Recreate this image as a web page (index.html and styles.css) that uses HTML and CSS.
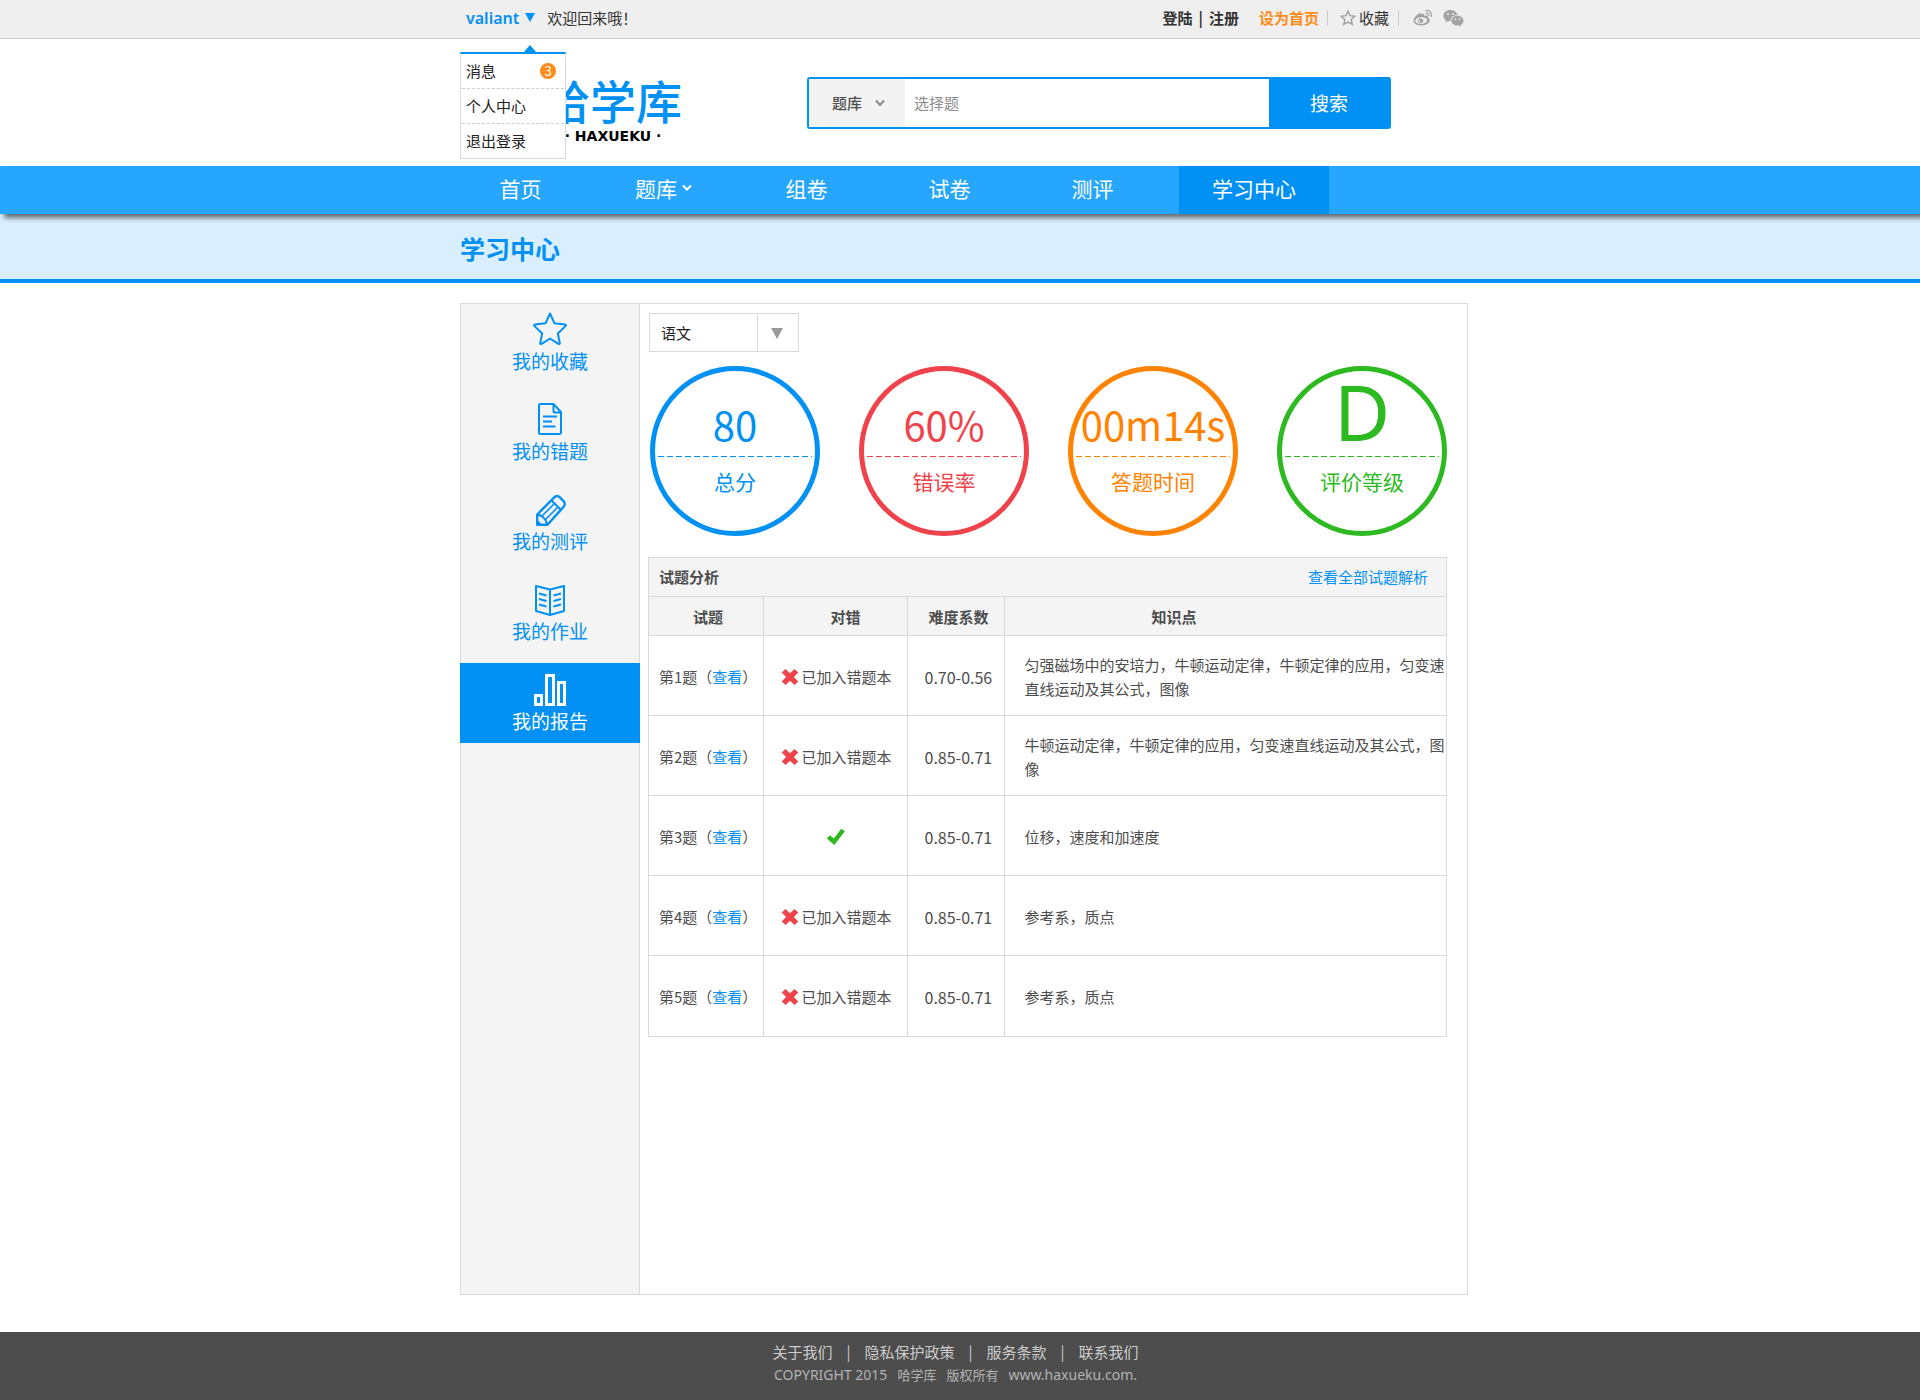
FILE: index.html
```html
<!DOCTYPE html>
<html lang="zh-CN">
<head>
<meta charset="utf-8">
<meta name="viewport" content="width=device-width, initial-scale=1">
<title>学习中心 - 哈学库</title>
<link rel="stylesheet" href="styles.css">
</head>
<body>
<div class="topbar">
  <div class="wrap topbar-inner">
    <div class="account">
      <a class="account-name" href="#">valiant <span class="caret"></span></a>
      <span>欢迎回来哦！</span>
      <ul class="account-menu">
        <li><a href="#">消息 <span class="badge">3</span></a></li>
        <li><a href="#">个人中心</a></li>
        <li><a href="#">退出登录</a></li>
      </ul>
    </div>
    <div class="tools">
      <div class="auth"><a href="#">登陆</a><span>|</span><a href="#">注册</a></div>
      <a class="set-home" href="#">设为首页</a>
      <a class="favorite" href="#">
        <svg width="16" height="16" viewBox="0 0 16 16" aria-hidden="true"><path d="M8 1.2l2 4.5 4.9.5-3.7 3.3 1.1 4.9L8 11.9l-4.3 2.5 1.1-4.9L1.100 6.200l4.900-.5z" fill="none" stroke="#999" stroke-width="1.300"/></svg>
        收藏</a>
      <div class="social">
        <a href="#" aria-label="微博"><svg width="20" height="18" viewBox="0 0 20 18"><path fill="#a3a3a3" fill-rule="evenodd" d="M8.300 5.200c1.600-.7 3.400-.6 3 1.300-.1.600 0 .5.500.3 1.800-.6 3.500-.2 2.900 1.500-.2.600 0 .6.500.8 3.700 1.500.7 7.400-6.700 7.400C3.800 16.500.5 14.500.5 11.800.5 8.600 5.400 3.600 7.900 4.300c.5.200.6.500.4.900zM8 8.200c-3.400.2-6 2-5.800 3.900.2 1.900 3 3.100 6.400 2.800 3.300-.3 5.700-2.200 5.500-4C13.900 9 11.400 8 8 8.200zm-.6 1.300c1.900-.2 3.300 1 3 2.500-.3 1.400-1.900 2.400-3.600 2.200-1.700-.2-2.600-1.500-2.100-2.800.4-1 1.400-1.800 2.700-1.900zm-1.200 2a1 .9 0 1 0 .1 1.800 1 .9 0 0 0-.1-1.800z"/><path d="M13 1.600c3.600-.7 6.200 2.300 5.200 5.700M13.200 4.300c1.900-.3 2.900 1 2.500 2.600" fill="none" stroke="#a3a3a3" stroke-width="1.300" stroke-linecap="round"/></svg></a>
        <a href="#" aria-label="微信"><svg width="21" height="18" viewBox="0 0 21 18"><path fill="#a3a3a3" fill-rule="evenodd" d="M7.500 1C3.500 1 .4 3.600.4 6.800c0 1.900 1 3.500 2.700 4.500l-.8 2.200 2.700-1.400c.9.300 1.700.4 2.700.4-.8-3.700 2.500-6.700 6.800-6.600C13.800 3 11 1 7.500 1zM5 4a1 1 0 1 1 0 2 1 1 0 0 1 0-2zm5 0a1 1 0 1 1 0 2 1 1 0 0 1 0-2z"/><path fill="#a3a3a3" fill-rule="evenodd" d="M14.500 6.800c-3.400 0-6 2.200-6 4.900s2.600 4.900 6 4.900c.7 0 1.400-.1 2-.3l2.200 1.200-.6-1.900c1.500-.9 2.400-2.300 2.400-3.900 0-2.700-2.600-4.900-6-4.900zm-2 2.600a.8.800 0 1 1 0 1.700.8.800 0 0 1 0-1.700zm4 0a.8.800 0 1 1 0 1.700.8.800 0 0 1 0-1.700z"/></svg></a>
      </div>
    </div>
  </div>
</div>

<header class="header">
  <div class="wrap header-inner">
    <a class="logo" href="#"><span class="logo-name">哈学库</span><span class="logo-latin">· HAXUEKU ·</span></a>
    <form class="search" role="search">
      <div class="search-scope">
        <select aria-label="搜索范围"><option>题库</option></select>
        <svg width="10" height="8" viewBox="0 0 10 8" aria-hidden="true"><path d="M1 1.500l4 4.500 4-4.500" fill="none" stroke="#8a8a8a" stroke-width="2"/></svg>
      </div>
      <input class="search-text" type="text" aria-label="搜索内容" placeholder="选择题">
      <button class="search-button" type="button">搜索</button>
    </form>
  </div>
</header>

<nav class="nav">
  <div class="wrap nav-inner">
    <a href="#">首页</a>
    <a href="#">题库<svg width="10" height="8" viewBox="0 0 10 8" aria-hidden="true"><path d="M1 1.500l4 4 4-4" fill="none" stroke="#fff" stroke-width="2"/></svg></a>
    <a href="#">组卷</a>
    <a href="#">试卷</a>
    <a href="#">测评</a>
    <a class="active" href="#">学习中心</a>
  </div>
</nav>

<div class="title-bar"><div class="wrap"><h1>学习中心</h1></div></div>

<div class="wrap">
  <div class="board">
    <aside class="sidebar">
      <a href="#"><svg width="34" height="34" viewBox="0 0 34 34" aria-hidden="true"><path d="M17 1.500l4.500 9.800 10.600 1.300c1 .1 1 .9.400 1.500l-7.700 7.400 2 9.400c.2 1-.6 1.400-1.400 1L17 26.500l-8.400 5.400c-.8.400-1.600 0-1.400-1l2-9.400-7.700-7.400c-.6-.6-.6-1.400.4-1.500l10.600-1.300z" fill="none" stroke="currentColor" stroke-width="2" stroke-linejoin="round"/></svg>我的收藏</a>
      <a href="#"><svg width="34" height="34" viewBox="0 0 34 34" aria-hidden="true"><g fill="none" stroke="currentColor" stroke-width="2" stroke-linejoin="round"><path d="M7.500 2h13L28 10v20.500a1.500 1.500 0 0 1-1.500 1.500h-19A1.500 1.500 0 0 1 6 30.500v-27A1.500 1.500 0 0 1 7.500 2z"/><path d="M20.500 2.500V9a1.500 1.500 0 0 0 1.500 1.500h6M10 14.500h14M10 19.500h9M10 24.500h12.500"/></g></svg>我的错题</a>
      <a href="#"><svg width="34" height="34" viewBox="0 0 34 34" aria-hidden="true"><g fill="none" stroke="currentColor" stroke-linejoin="round"><path stroke-width="2.400" d="M4.200 32.800V22.500L21 5.600c1.800-1.800 4.300-1.800 6.100 0l3.300 3.300c1.800 1.800 1.800 4.300 0 6.100L14.500 32.800z"/><path stroke-width="2" d="M4.500 22.500c4.500 1 8.500 5 9.800 10M18.500 8.500l9.500 9.500"/><path stroke-width="1.600" d="M9 24L21 12M12.500 27.500L24.500 15.500"/></g><path d="M4 27.500v5.500h5.500z" fill="currentColor"/></svg>我的测评</a>
      <a href="#"><svg width="34" height="34" viewBox="0 0 34 34" aria-hidden="true"><g fill="none" stroke="currentColor" stroke-width="2" stroke-linejoin="round"><path d="M17 7.500L3 4v25l14 4 14-4V4zM17 7.500V33M6 11.500l7.500 2M6 17l7.500 2M6 22.500l7.500 2M28 11.500l-7.500 2M28 17l-7.500 2M28 22.500l-7.500 2"/></g></svg>我的作业</a>
      <a class="active" href="#"><svg width="34" height="34" viewBox="0 0 34 34" aria-hidden="true"><g fill="none" stroke="currentColor" stroke-width="3"><path d="M2.500 23.500h6v9h-6zM13.500 3.500h7v29h-7zM25.500 10.500h6v22h-6z"/></g></svg>我的报告</a>
    </aside>
    <main class="content">
      <div class="subject">
        <select aria-label="科目"><option>语文</option></select>
        <span class="subject-arrow"></span>
      </div>
      <div class="stats">
        <div class="stat blue"><strong>80</strong><span>总分</span></div>
        <div class="stat red"><strong>60%</strong><span>错误率</span></div>
        <div class="stat orange"><strong>00m14s</strong><span>答题时间</span></div>
        <div class="stat green"><strong class="grade">D</strong><span>评价等级</span></div>
      </div>
      <section class="analysis">
        <div class="analysis-head"><h2>试题分析</h2><a href="#">查看全部试题解析</a></div>
        <table>
          <colgroup><col class="col-no"><col class="col-result"><col class="col-level"><col></colgroup>
          <thead><tr><th>试题</th><th>对错</th><th>难度系数</th><th>知识点</th></tr></thead>
          <tbody>
            <tr><td>第1题（<a href="#">查看</a>）</td><td><div class="result"><svg class="mark" viewBox="0 0 18 18" aria-hidden="true"><use href="#cross"/></svg>已加入错题本</div></td><td>0.70-0.56</td><td>匀强磁场中的安培力，牛顿运动定律，牛顿定律的应用，匀变速直线运动及其公式，图像</td></tr>
            <tr><td>第2题（<a href="#">查看</a>）</td><td><div class="result"><svg class="mark" viewBox="0 0 18 18" aria-hidden="true"><use href="#cross"/></svg>已加入错题本</div></td><td>0.85-0.71</td><td>牛顿运动定律，牛顿定律的应用，匀变速直线运动及其公式，图像</td></tr>
            <tr><td>第3题（<a href="#">查看</a>）</td><td><div class="result right"><svg width="20" height="18" viewBox="0 0 20 18" role="img" aria-label="正确"><path d="M.8 10.500L4 7.300l3.800 3.200L15.300.8l3.600 2.400L8.300 17z" fill="#2dba20"/></svg></div></td><td>0.85-0.71</td><td>位移，速度和加速度</td></tr>
            <tr><td>第4题（<a href="#">查看</a>）</td><td><div class="result"><svg class="mark" viewBox="0 0 18 18" aria-hidden="true"><use href="#cross"/></svg>已加入错题本</div></td><td>0.85-0.71</td><td>参考系，质点</td></tr>
            <tr><td>第5题（<a href="#">查看</a>）</td><td><div class="result"><svg class="mark" viewBox="0 0 18 18" aria-hidden="true"><use href="#cross"/></svg>已加入错题本</div></td><td>0.85-0.71</td><td>参考系，质点</td></tr>
          </tbody>
        </table>
      </section>
    </main>
  </div>
</div>

<footer class="footer">
  <div class="footer-links"><a href="#">关于我们</a><span>|</span><a href="#">隐私保护政策</a><span>|</span><a href="#">服务条款</a><span>|</span><a href="#">联系我们</a></div>
  <div class="copyright"><span class="latin">COPYRIGHT 2015</span><span>哈学库</span><span>版权所有</span><span class="latin">www.haxueku.com.</span></div>
</footer>

<svg class="symbols" aria-hidden="true"><symbol id="cross" viewBox="0 0 18 18"><path d="M4.500 1L9 5.200 13.500 1 17.300 4.500 12.900 9l4.400 4.500-3.800 3.500L9 12.800 4.500 17 .7 13.500 5.100 9 .7 4.500z" fill="#f0424a"/></symbol></svg>
</body>
</html>
```
FILE: styles.css
```css
* { box-sizing: border-box; }
body {
  margin: 0;
  color: #4d4d4d;
  background: #fff;
  font: 15px/24px "Noto Sans CJK SC", "Noto Sans", sans-serif;
}
a { color: inherit; text-decoration: none; }
ul { list-style: none; margin: 0; padding: 0; }
h1, h2 { margin: 0; }
svg { display: block; flex: none; }
select, input, button { font: inherit; border: 0; border-radius: 0; margin: 0; outline: 0; }
select { appearance: none; background: transparent; }
.symbols { display: none; }

.wrap { max-width: 1016px; margin: 0 auto; padding-left: 8px; }

.topbar { background: #efefef; border-bottom: 1px solid #ccc; color: #333; }
.topbar-inner { display: flex; justify-content: space-between; align-items: center; height: 38px; padding-bottom: 3px; }
.account { position: relative; display: flex; align-items: center; align-self: stretch; gap: 12px; padding-left: 6px; }
.account-name { display: flex; align-items: center; gap: 6px; color: #0190f3; font: 600 16px/24px "Noto Sans", sans-serif; }
.caret { border: 5px solid transparent; border-top: 9px solid #0190f3; border-bottom: 0; }
.account-menu {
  position: absolute; z-index: 2; top: 52px; left: 0; width: 106px;
  background: #fff; border: 1px solid #d9d9d9; border-top: 2px solid #0190f3; color: #222;
}
.account-menu::before {
  content: ""; position: absolute; top: -9px; right: 29px;
  border: 6px solid transparent; border-bottom: 7px solid #0190f3; border-top: 0;
}
.account-menu li { margin: 0 1px; }
.account-menu li + li { border-top: 1px dashed #ccc; }
.account-menu a { display: flex; align-items: center; justify-content: space-between; height: 34px; padding: 0 8px 0 4px; }
.badge { width: 16px; height: 16px; border-radius: 50%; background: #ff8c1a; color: #fff; font-size: 13px; line-height: 16px; text-align: center; }

.tools { display: flex; align-items: center; padding-right: 4px; }
.auth { display: flex; gap: 6px; font-weight: 700; margin-right: 20px; }
.set-home { color: #ff8c1a; font-weight: 700; padding-right: 8px; border-right: 1px solid #ccc; line-height: 16px; }
.favorite { display: flex; align-items: center; gap: 3px; padding: 0 9px 0 12px; border-right: 1px solid #ccc; line-height: 16px; }
.social { display: flex; gap: 10px; padding-left: 14px; }

.header-inner { display: flex; justify-content: space-between; align-items: center; height: 127px; padding-right: 77px; padding-left: 92px; }
.logo { display: flex; flex-direction: column; align-items: center; gap: 3px; padding-top: 16px; color: #0190f3; }
.logo-name { font-size: 46px; line-height: 48px; font-weight: 500; }
.logo-latin { color: #000; font: 700 14px/20px "DejaVu Sans", sans-serif; }
.search { display: flex; width: 584px; height: 52px; border: 2px solid #0190f3; border-radius: 3px; background: #0190f3; }
.search-scope { display: flex; align-items: center; width: 96px; padding-left: 23px; gap: 13px; background: #f3f3f3; }
.search-scope select { width: 30px; padding: 0; color: #4d4d4d; font-weight: 500; }
.search-text { flex: 1; min-width: 0; padding: 0 9px; color: #4d4d4d; background: #fff; }
.search-text::placeholder { color: #8c8c8c; opacity: 1; }
.search-button { width: 120px; color: #fff; background: #0190f3; font-size: 19px; }

.nav { position: relative; z-index: 1; background: #26a6ff; box-shadow: 4px 4px 5px rgba(0, 0, 0, .55); color: #fff; font-size: 21px; }
.nav-inner { display: flex; gap: 30px; padding-left: 12px; }
.nav a { display: flex; align-items: center; justify-content: center; gap: 5px; width: 113px; height: 48px; padding-bottom: 4px; }
.nav .active { width: 150px; background: #0190f3; }

.title-bar { background: #d9efff; border-bottom: 4px solid #0190f3; }
.title-bar h1 { padding: 18px 0 15px; color: #0190f3; font-size: 25px; line-height: 32px; font-weight: 700; }

.board { display: flex; min-height: 992px; margin: 20px 0 37px; border: 1px solid #d9d9d9; }
.sidebar { display: flex; flex-direction: column; gap: 11px; width: 179px; background: #f4f4f4; border-right: 1px solid #d9d9d9; }
.sidebar a { display: flex; flex-direction: column; align-items: center; height: 80px; margin-top: -1px; padding-top: 9px; color: #0190f3; font-size: 19px; line-height: 30px; }
.sidebar .active { margin: -1px -1px 0; color: #fff; background: #0190f3; }

.content { flex: 1; min-width: 0; padding: 9px 20px 20px 8px; }
.subject { position: relative; display: flex; width: 150px; height: 39px; margin-left: 1px; border: 1px solid #d9d9d9; }
.subject select { width: 100%; padding: 0 11px; color: #222; }
.subject-arrow { position: absolute; top: 0; right: 0; width: 41px; height: 37px; border-left: 1px solid #d9d9d9; pointer-events: none; }
.subject-arrow::before { content: ""; position: absolute; top: 14px; left: 13px; border: 6px solid transparent; border-top: 11px solid #999; border-bottom: 0; }

.stats { display: flex; gap: 39px; margin: 14px 0 21px; padding-left: 2px; }
.stat { display: flex; flex: none; flex-direction: column; align-items: center; width: 170px; height: 170px; border: 5px solid; border-radius: 50%; }
.stat strong {
  display: flex; align-items: flex-end; justify-content: center; width: 154px; height: 86px; padding-bottom: 3px;
  background: repeating-linear-gradient(90deg, currentColor 0 6px, transparent 6px 9px) bottom / 100% 1px no-repeat;
  font-size: 40px; line-height: 60px; font-weight: 400;
}
.stat .grade { font: 77px/84px "Noto Sans", sans-serif; }
.stat span { margin-top: 9px; font-size: 21px; line-height: 30px; }
.blue { color: #0190f3; }
.red { color: #f0424a; }
.orange { color: #ff8200; }
.green { color: #2dba20; }

.analysis { border: 1px solid #d9d9d9; }
.analysis-head { display: flex; align-items: center; justify-content: space-between; height: 38px; padding: 0 18px 0 10px; background: #f4f4f4; }
.analysis h2 { font-size: 15px; line-height: 24px; font-weight: 700; }
.analysis a { color: #0190f3; }
table { width: 100%; border-collapse: collapse; table-layout: fixed; }
.col-no { width: 114px; }
.col-result { width: 144px; }
.col-level { width: 97px; }
th, td { height: 80px; padding: 2px 0 0; text-align: left; border: 1px solid #d9d9d9; }
th { height: 39px; background: #f4f4f4; font-weight: 700; }
tr > :first-child { border-left: 0; }
tr > :last-child { border-right: 0; }
tbody tr:last-child td { border-bottom: 0; }
th:nth-child(1) { padding-left: 44px; }
th:nth-child(2) { padding-left: 67px; }
th:nth-child(3) { padding-left: 21px; }
th:nth-child(4) { padding-left: 147px; }
td:nth-child(1) { padding-left: 10px; }
td:nth-child(2) { padding-left: 17px; }
td:nth-child(3) { padding-left: 17px; font-size: 16px; }
td:nth-child(4) { padding-left: 20px; }
.result { display: flex; align-items: center; gap: 3px; }
.right { padding-left: 45px; }
.mark { width: 18px; height: 18px; }

.footer { padding: 8px 9px 14px 0; background: #4d4d4d; color: #ccc; }
.footer-links { display: flex; justify-content: center; gap: 14px; }
.copyright { display: flex; justify-content: center; gap: 10px; color: #b3b3b3; font-size: 13px; line-height: 22px; }
.latin { font-family: "Noto Sans", sans-serif; font-size: 14px; }
```
